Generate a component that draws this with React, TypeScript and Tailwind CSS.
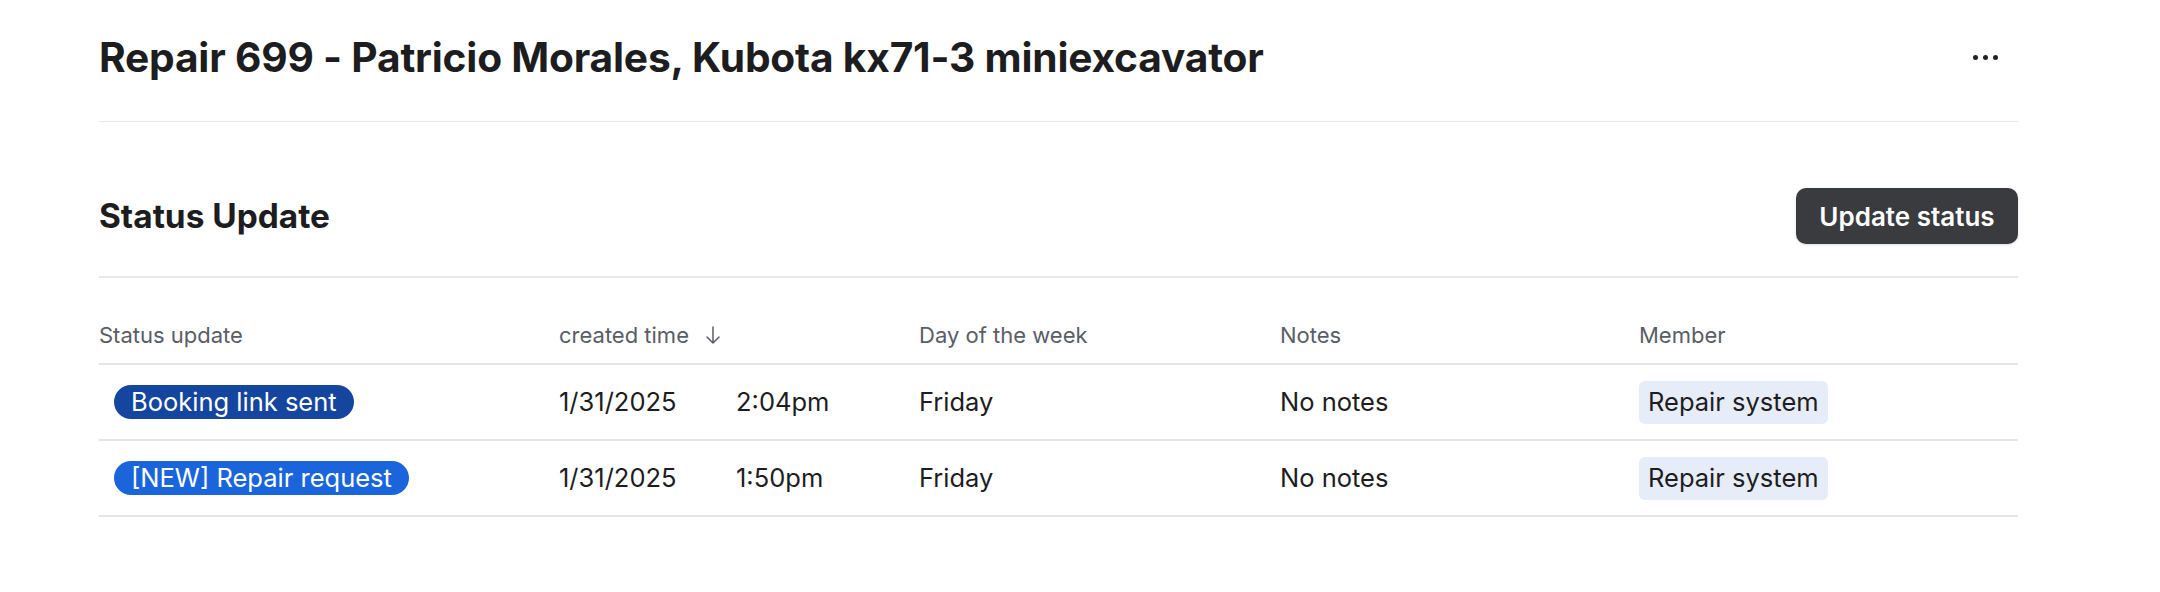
import React from "react";

const rows = [
  { status: "Booking link sent", color: "bg-[#1446a0]", date: "1/31/2025", time: "2:04pm", day: "Friday", notes: "No notes", member: "Repair system" },
  { status: "[NEW] Repair request", color: "bg-[#1a64dc]", date: "1/31/2025", time: "1:50pm", day: "Friday", notes: "No notes", member: "Repair system" },
];

export default function App() {
  return (
    <div className="w-[2160px] h-[592px] bg-white text-[#1d1d1f]" style={{ fontFamily: "Inter, 'Noto Sans', sans-serif" }}>
      <div className="ml-[99px] w-[1919px]">
        <div className="flex items-center justify-between h-[122px] border-b border-[#e8e8e8]">
          <h1 className="text-[40.7px] leading-[48px] font-bold tracking-[-0.2px] pb-[6px]">
            Repair 699 - Patricio Morales, Kubota kx71-3 miniexcavator
          </h1>
          <div className="mr-[20px] mb-[6px] flex gap-[5px] items-center">
            <span className="w-[5px] h-[5px] rounded-full bg-[#222]" />
            <span className="w-[5px] h-[5px] rounded-full bg-[#222]" />
            <span className="w-[5px] h-[5px] rounded-full bg-[#222]" />
          </div>
        </div>
        <div className="flex items-center justify-between pt-[66px] pb-[32px] border-b-2 border-[#e8e8e8]">
          <h2 className="text-[33.4px] leading-[40px] font-bold">Status Update</h2>
          <button className="h-[56px] w-[222px] rounded-[10px] bg-[#3a3b3f] text-white text-[26px] font-semibold shadow-sm">
            Update status
          </button>
        </div>
        <div className="grid grid-cols-[460px_360px_361px_359px_1fr] items-end h-[87px] pb-[14px] border-b-2 border-[#e5e5e5] text-[22px] leading-[28px] text-[#5a5d66]">
          <div>Status update</div>
          <div className="flex items-center gap-[16px]">
            created time
            <svg width="16" height="20" viewBox="0 0 16 20" fill="none" stroke="#5a5d66" strokeWidth="1.5" strokeLinecap="round" strokeLinejoin="round">
              <path d="M8 2v16M2 12l6 6 6-6" />
            </svg>
          </div>
          <div>Day of the week</div>
          <div>Notes</div>
          <div>Member</div>
        </div>
        {rows.map((r, i) => (
          <div key={i} className="grid grid-cols-[460px_360px_361px_359px_1fr] items-center h-[76px] border-b-2 border-[#e5e5e5] text-[25.5px]">
            <div className="pl-[15px]">
              <span className={`inline-flex items-center h-[34px] px-[17px] rounded-full text-white text-[25.5px] ${r.color}`}>
                {r.status}
              </span>
            </div>
            <div className="flex">
              <span className="w-[177px]">{r.date}</span>
              <span>{r.time}</span>
            </div>
            <div>{r.day}</div>
            <div>{r.notes}</div>
            <div>
              <span className="inline-flex items-center h-[43px] px-[9px] rounded-[6px] bg-[#e6ecf8]">{r.member}</span>
            </div>
          </div>
        ))}
      </div>
    </div>
  );
}
